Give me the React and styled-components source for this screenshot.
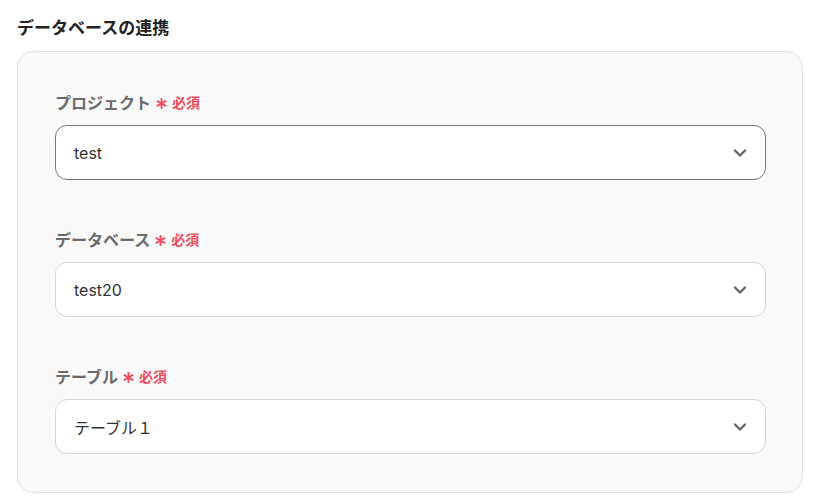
import React from "react";
import styled, { createGlobalStyle } from "styled-components";

const GlobalStyle = createGlobalStyle`
  body {
    margin: 0;
    background: #ffffff;
    font-family: "Inter", "Noto Sans CJK JP", sans-serif;
  }
`;

const Page = styled.div`
  padding: 14px 15px 6px 17px;
`;

const Heading = styled.h2`
  margin: 0 0 12px;
  font-size: 17px;
  line-height: 25px;
  font-weight: 700;
  color: #222222;
  font-family: "Noto Sans CJK JP", sans-serif;
`;

const Panel = styled.div`
  display: flex;
  flex-direction: column;
  gap: 47px;
  padding: 38px 36px 38px 37px;
  background: #f9f9f9;
  border: 1px solid #e2e2e2;
  border-radius: 16px;
`;

const Field = styled.div`
  display: flex;
  flex-direction: column;
  gap: 11px;
`;

const Label = styled.div`
  display: flex;
  align-items: center;
  height: 24px;
  font-family: "Noto Sans CJK JP", sans-serif;
  font-size: 16px;
  font-weight: 700;
  color: #6b6b6b;
`;

const Star = styled.svg`
  margin-left: 5px;
  margin-top: 2px;
  flex: none;
`;

const Required = styled.span`
  margin-left: 5px;
  color: #ef4b61;
  font-size: 14px;
  font-weight: 700;
`;

const Select = styled.div`
  display: flex;
  align-items: center;
  justify-content: space-between;
  height: 55px;
  box-sizing: border-box;
  padding: 0 18px 0 18px;
  background: #ffffff;
  border: 1px solid ${(p) => (p.$active ? "#777777" : "#d3d6dc")};
  border-radius: 12px;
  font-size: 16px;
  color: #333333;
`;

const Value = styled.span`
  font-family: "Inter", "Noto Sans CJK JP", sans-serif;
`;

const Asterisk = () => (
  <Star width="11" height="11" viewBox="0 0 11 11">
    <g stroke="#ef4b61" strokeWidth="1.8" strokeLinecap="round">
      <path d="M5.5 0.8 V10.2" />
      <path d="M1.4 3.1 L9.6 7.9" />
      <path d="M1.4 7.9 L9.6 3.1" />
    </g>
  </Star>
);

const Chevron = () => (
  <svg width="14" height="14" viewBox="0 0 14 14" fill="none">
    <path d="M2 4.5 L7 9.5 L12 4.5" stroke="#666666" strokeWidth="2.4" strokeLinecap="round" strokeLinejoin="round" />
  </svg>
);

const fields = [
  { label: "プロジェクト", value: "test", active: true },
  { label: "データベース", value: "test20" },
  { label: "テーブル", value: "テーブル１" },
];

export default function App() {
  return (
    <Page>
      <GlobalStyle />
      <Heading>データベースの連携</Heading>
      <Panel>
        {fields.map((f) => (
          <Field key={f.label}>
            <Label>
              {f.label}
              <Asterisk />
              <Required>必須</Required>
            </Label>
            <Select $active={f.active}>
              <Value>{f.value}</Value>
              <Chevron />
            </Select>
          </Field>
        ))}
      </Panel>
    </Page>
  );
}
